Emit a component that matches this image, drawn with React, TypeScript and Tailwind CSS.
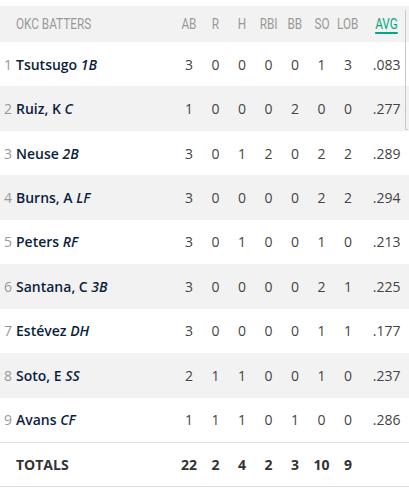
import React from "react";

type Row = { n: number; name: string; pos: string; s: number[]; avg: string };

const rows: Row[] = [
  { n: 1, name: "Tsutsugo", pos: "1B", s: [3, 0, 0, 0, 0, 1, 3], avg: ".083" },
  { n: 2, name: "Ruiz, K", pos: "C", s: [1, 0, 0, 0, 2, 0, 0], avg: ".277" },
  { n: 3, name: "Neuse", pos: "2B", s: [3, 0, 1, 2, 0, 2, 2], avg: ".289" },
  { n: 4, name: "Burns, A", pos: "LF", s: [3, 0, 0, 0, 0, 2, 2], avg: ".294" },
  { n: 5, name: "Peters", pos: "RF", s: [3, 0, 1, 0, 0, 1, 0], avg: ".213" },
  { n: 6, name: "Santana, C", pos: "3B", s: [3, 0, 0, 0, 0, 2, 1], avg: ".225" },
  { n: 7, name: "Estévez", pos: "DH", s: [3, 0, 0, 0, 0, 1, 1], avg: ".177" },
  { n: 8, name: "Soto, E", pos: "SS", s: [2, 1, 1, 0, 0, 1, 0], avg: ".237" },
  { n: 9, name: "Avans", pos: "CF", s: [1, 1, 1, 0, 1, 0, 0], avg: ".286" },
];

const heads = ["AB", "R", "H", "RBI", "BB", "SO", "LOB"];
const totals = [22, 2, 4, 2, 3, 10, 9];

export default function App() {
  return (
    <div className="relative w-[409px] h-[493px] bg-white pt-[6px]" style={{ fontFamily: '"Open Sans", sans-serif' }}>
      <div className="absolute right-[1px] top-[10px] h-[120px] w-[3px] border-l border-b border-[#c8c8c8] rounded-bl-[2px]" />
      <div className="flex items-center h-[36px] bg-[#f2f2f2] text-[14px] text-[#999999] font-[Roboto,sans-serif]">
        <div className="w-[177px] pl-[16px]">
          <span className="inline-block scale-x-[0.84] origin-left">OKC BATTERS</span>
        </div>
        {heads.map((h) => (
          <div key={h} className="w-[26.7px] flex justify-center">
            <span className="inline-block scale-x-[0.84]">{h}</span>
          </div>
        ))}
        <div className="w-[48px] flex justify-center pl-[3px]">
          <span className="inline-block scale-x-[0.84] text-[#00a884] underline underline-offset-[3px] decoration-[1.5px]">AVG</span>
        </div>
      </div>
      {rows.map((r, i) => (
        <div
          key={r.n}
          className={`flex items-center h-[44.45px] text-[14px] ${i % 2 === 1 ? "bg-[#f2f2f2]" : "bg-white"}`}
        >
          <div className="w-[177px] flex items-center">
            <span className="w-[16px] pl-[4px] text-[#999999]">{r.n}</span>
            <span className="text-[#0c1f3d] font-semibold">
              {r.name} <i className="font-semibold">{r.pos}</i>
            </span>
          </div>
          {r.s.map((v, j) => (
            <div key={j} className="w-[26.7px] text-center text-[#444444]">{v}</div>
          ))}
          <div className="w-[48px] text-center pl-[3px] text-[#444444]">{r.avg}</div>
        </div>
      ))}
      <div className="flex items-center h-[45px] border-t border-b border-[#e0e0e0] text-[14px] font-bold text-[#333333]">
        <div className="w-[177px] pl-[16px]">TOTALS</div>
        {totals.map((v, j) => (
          <div key={j} className="w-[26.7px] text-center">{v}</div>
        ))}
        <div className="w-[48px]" />
      </div>
    </div>
  );
}
